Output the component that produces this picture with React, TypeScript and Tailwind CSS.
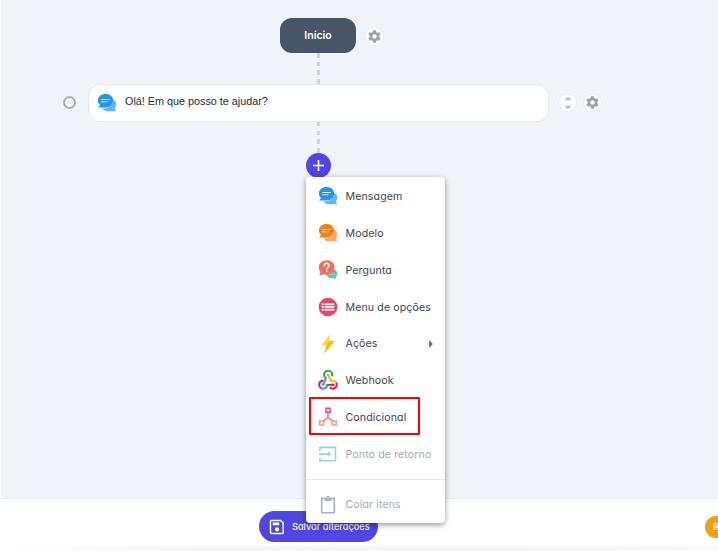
import React from "react";

const ui = "font-['Inter','Noto_Sans',sans-serif] [font-feature-settings:'cv11']";

function Chat({ front, back }: { front: string; back: string }) {
  return (
    <svg viewBox="0 0 20 20" className="size-5">
      <path d="M16.2 6.5c2 1 3 2.8 3 5 0 1.500-.5 2.600-1.200 3.500.1 1.200.5 2.200 1.400 3.300H11.500c-2.800 0-5-1.100-6.100-3.100 6 .8 10.600-2.500 10.800-8.700Z" fill={back} />
      <path d="M8.600 1C4.200 1 .9 3.700.9 7.300c0 2.100.8 3.500 2 4.500-.2 1-.8 1.800-1.900 2.600h7.600c4.200 0 7.500-2.900 7.500-6.900S12.900 1 8.600 1Z" fill={front} />
      <path d="M4.700 6.500h7.700M4.700 8.700h5.300" stroke="#fff" strokeWidth="1.100" strokeLinecap="round" opacity=".85" />
    </svg>
  );
}

function Question() {
  return (
    <svg viewBox="0 0 20 20" className="size-5">
      <path d="M12 9.200h2.500c3 0 4.900 1.900 4.900 4.400 0 1.500-.7 2.600-1.600 3.400v2.500l-2.600-1.500c-3.700.5-6.300-1-6.700-3.800Z" fill="#5ec4b6" />
      <path d="M11.500 14h.1M14 14h.1M16.500 14h.1" stroke="#fff" strokeWidth="1.200" strokeLinecap="round" />
      <path d="M8.700.3C4.200.3.800 3.300.800 7.500c0 1.900.7 3.300 1.500 4.400L1.400 15.700l4-1.400c5.700 1.500 11.200-1.600 11.200-6.800 0-4.200-3.500-7.200-7.900-7.200Z" fill="#f4705c" />
      <path d="M6.300 5.500C6.300 2.700 11 2.600 11 5.400c0 1.800-2.200 1.800-2.200 3.600M8.800 11v.2" fill="none" stroke="#fff" strokeWidth="1.500" strokeLinecap="round" />
    </svg>
  );
}

function ListBadge() {
  return (
    <svg viewBox="0 0 20 20" className="size-5">
      <circle cx="10" cy="10" r="9.300" fill="#e24b60" />
      <path d="M3.700 7.200h2M3.700 10h2M3.700 12.800h2M6.600 7.200h9.600M6.600 10h9.600M6.600 12.800h9.600" stroke="#fff" strokeWidth="1.900" opacity=".88" />
    </svg>
  );
}

function Bolt() {
  return (
    <svg viewBox="0 0 20 20" className="size-5">
      <path d="M12.100.5 3.300 11.300h5.200L6.200 19.500 16.700 7.100h-5.600Z" fill="#ffdc35" />
      <path d="m16.700 7.100-10.500 12.400 3.200-10 1.300-2.200Z" fill="#fdbb12" />
    </svg>
  );
}

function Webhook() {
  return (
    <svg viewBox="0 0 20 20" className="size-5" fill="none" strokeWidth="1.900" strokeLinecap="round">
      <path d="M14 5.600A4 4 0 1 0 7.900 8.100L5.300 13.800" stroke="#22b36b" />
      <path d="M4.500 10.700a4 4 0 1 0 4.700 4.200h5.600" stroke="#f4155b" />
      <path d="M5 14.500 6.900 10.800" stroke="#13c5ee" />
      <path d="M4.300 18.500a4 4 0 0 0 4.700-3" stroke="#13c5ee" />
      <path d="M10 4.900 13.200 11a4 4 0 0 1 5.400 2.400" stroke="#ffb300" />
      <path d="M18.600 13.400a4 4 0 0 1-6.300 4.300" stroke="#f4155b" />
      <circle cx="9.900" cy="4.900" r=".8" fill="#ffb300" stroke="#ffb300" strokeWidth="1" />
      <circle cx="5" cy="14.500" r="1" fill="#13c5ee" stroke="#13c5ee" strokeWidth="1" />
      <circle cx="15" cy="14.700" r="1" fill="#f4155b" stroke="#f4155b" strokeWidth="1" />
    </svg>
  );
}

function Branch() {
  return (
    <svg viewBox="0 0 20 20" className="size-5" fill="none" strokeWidth="1.600">
      <path d="M10 6v4.500L5 14.200M10 10.500l5 3.700" stroke="#f58a92" strokeWidth="1.900" />
      <rect x="8" y="1.300" width="4" height="4" stroke="#ee4b8b" />
      <rect x="1.600" y="14" width="4" height="4" stroke="#fa9a88" />
      <rect x="14.300" y="14" width="4" height="4" stroke="#fa9a88" />
    </svg>
  );
}

function ReturnPoint() {
  return (
    <svg viewBox="0 0 20 20" className="size-5" fill="none" stroke="#9bcdf0" strokeWidth="1.600">
      <path d="M1.900 6.800V3.400h15.600v13.300H1.900v-3.200M1 10.100h10.500" />
      <path d="m10 7.200 3.300 2.900-3.300 2.900Z" fill="#9bcdf0" stroke="none" />
    </svg>
  );
}

function Clipboard() {
  return (
    <svg viewBox="0 0 20 20" className="size-5" fill="none" stroke="#a9b2c0" strokeWidth="1.600">
      <path d="M6.500 3.400H3.700v14.300h12.600V3.400h-2.600" />
      <path d="M6.500 2.600h7.200v3.500H6.500Z" fill="#a9b2c0" stroke="none" />
      <circle cx="10.100" cy="2.600" r="1.300" fill="#fff" strokeWidth="1.200" />
    </svg>
  );
}

function GearButton() {
  return (
    <span className="flex size-[19px] items-center justify-center rounded-full border border-[#e7ecf3] bg-white">
      <svg viewBox="0 0 24 24" className="size-[15px] shrink-0" fill="#94a3b8">
        <path d="M19.430 12.980c.04-.32.070-.64.070-.98s-.030-.66-.070-.98l2.110-1.650c.19-.15.240-.42.120-.64l-2-3.460c-.12-.22-.39-.3-.61-.22l-2.490 1c-.52-.4-1.080-.73-1.690-.98l-.38-2.650C14.460 2.180 14.250 2 14 2h-4c-.25 0-.46.180-.49.420l-.38 2.650c-.61.250-1.170.59-1.690.98l-2.490-1c-.23-.09-.49 0-.61.220l-2 3.460c-.13.220-.07.490.12.640l2.110 1.650c-.04.320-.07.650-.07.980s.03.660.07.980l-2.110 1.650c-.19.150-.24.420-.12.640l2 3.460c.12.220.39.300.61.220l2.490-1c.52.400 1.080.730 1.690.980l.38 2.650c.03.240.24.420.49.420h4c.25 0 .46-.18.490-.42l.38-2.650c.61-.25 1.170-.59 1.690-.98l2.490 1c.23.090.49 0 .61-.22l2-3.460c.12-.22.070-.49-.12-.64l-2.110-1.650ZM12 15.500c-1.930 0-3.500-1.570-3.500-3.500s1.570-3.500 3.500-3.500 3.500 1.570 3.500 3.500-1.570 3.500-3.500 3.500Z" />
      </svg>
    </span>
  );
}

function Connector() {
  return <div className="ml-[317px] h-[31px] w-[3px] bg-[repeating-linear-gradient(to_bottom,#cbd5e1_0_4.500px,transparent_4.500px_8.700px)]" />;
}

const items = [
  { label: "Mensagem", icon: <Chat front="#2196f3" back="#64b5f6" /> },
  { label: "Modelo", icon: <Chat front="#fb7c1d" back="#fda65e" /> },
  { label: "Pergunta", icon: <Question /> },
  { label: "Menu de opções", icon: <ListBadge /> },
  { label: "Ações", icon: <Bolt />, sub: true },
  { label: "Webhook", icon: <Webhook /> },
  { label: "Condicional", icon: <Branch />, marked: true },
  { label: "Ponto de retorno", icon: <ReturnPoint />, off: true },
];

function Menu() {
  return (
    <div className="absolute left-[306px] top-[177px] h-[346px] w-[139px] rounded-[4px] bg-white pt-[0.600px] shadow-[0_2px_5px_rgba(0,0,0,0.32),0_1px_8px_rgba(0,0,0,0.12)]">
      {items.map((item) => (
        <div key={item.label} className={`relative flex h-[36.900px] items-center gap-2 pl-[11.500px] text-[10.600px] tracking-[0.110px] whitespace-nowrap ${item.off ? "text-[#a4a9b3]" : "text-[#3a4354]"}`}>
          {item.icon}
          <span className="pt-[1.500px]">{item.label}</span>
          {item.sub && <span className="ml-auto mr-[12px] border-y-[4px] border-l-[4px] border-y-transparent border-l-[#64748b]" />}
          {item.marked && <span className="absolute left-[3px] top-[-2px] h-[38px] w-[111px] rounded-[1px] border-2 border-[#ff0000]" />}
        </div>
      ))}
      <div className="mt-[6px] h-px bg-[#e2e8f0]" />
      <div className="mt-[6px] flex h-[38px] items-center gap-2 pl-[11.500px] text-[10.600px] tracking-[0.110px] text-[#a4a9b3]">
        <Clipboard />
        <span>Colar itens</span>
      </div>
    </div>
  );
}

export default function App() {
  return (
    <div className={`relative h-[551px] w-[718px] overflow-hidden bg-white ${ui}`}>
      <main className="ml-px h-[498px] bg-[#f0f4f9]">
        <div className="-ml-px pt-[18px]">
          <div className="ml-[280px] flex h-[35px] items-center gap-[9px]">
            <div className="flex h-[35px] w-[76px] items-center justify-center rounded-[12px] bg-[#475569] text-[10.500px] font-semibold text-white">Início</div>
            <span className="pt-px"><GearButton /></span>
          </div>
          <Connector />
          <div className="flex h-[38px] items-center pl-[63px]">
            <span className="mb-px size-[13px] rounded-full border-2 border-[#a3b0c3]" />
            <div className="ml-[12px] flex h-[38px] w-[461px] items-center rounded-[12px] border border-[#e2e8f0] bg-white pl-[8px]">
              <Chat front="#2196f3" back="#64b5f6" />
              <span className="mb-[3px] ml-[8px] font-['Liberation_Sans',sans-serif] text-[10.800px] text-[#1e293b]">Olá! Em que posso te ajudar?</span>
            </div>
            <span className="mb-px ml-[9px] flex size-[19px] items-center justify-center rounded-full border border-[#e7ecf3] bg-white">
              <svg viewBox="0 0 12 14" className="h-[14px] w-3" fill="none" stroke="#94a3b8" strokeWidth="1.300"><path d="m3.700 4.300 2.300-2.300 2.300 2.300M3.700 9.700 6 12l2.300-2.300" /></svg>
            </span>
            <span className="mb-px ml-[6px]"><GearButton /></span>
          </div>
          <Connector />
          <div className="ml-[306px] flex size-[25px] items-center justify-center rounded-full bg-[#4f46e5]">
            <svg viewBox="0 0 25 25" className="size-[25px]" stroke="#fff" strokeWidth="1.600"><path d="M7 12.500h11M12.500 7v11" /></svg>
          </div>
        </div>
      </main>
      <footer className="flex h-[48px] items-center justify-between border-t border-[#e2e8f0] pl-[258.500px] pt-[8px]">
        <button className="flex h-[31px] w-[119.500px] items-center gap-[7px] rounded-full bg-[#4f46e5] pl-[10.500px] text-[9.200px] font-medium whitespace-nowrap text-white">
          <svg viewBox="0 0 16 16" className="size-4 shrink-0" fill="none" stroke="#fff" strokeWidth="1.500">
            <path d="M2 1.500h9.700l2.500 2.600v9.400q0 1-1 1H2.500q-1 0-1-1v-11q0-1 .5-1Z" />
            <path d="M3.700 3.500h6.500v2.800H3.700Z" fill="#fff" stroke="none" />
            <circle cx="8" cy="10.300" r="2.100" fill="#fff" stroke="none" />
          </svg>
          Salvar alterações
        </button>
        <div className="flex h-[22px] w-[13px] items-center overflow-hidden rounded-l-full bg-[#f59e0b] pl-[8px] text-[9.300px] font-semibold text-white">R</div>
      </footer>
      <div className="h-[5px] bg-[linear-gradient(to_right,#ffffff,#f4f4f4_30%,#f4f4f4_60%,#faf8f8)]" />
      <Menu />
    </div>
  );
}
